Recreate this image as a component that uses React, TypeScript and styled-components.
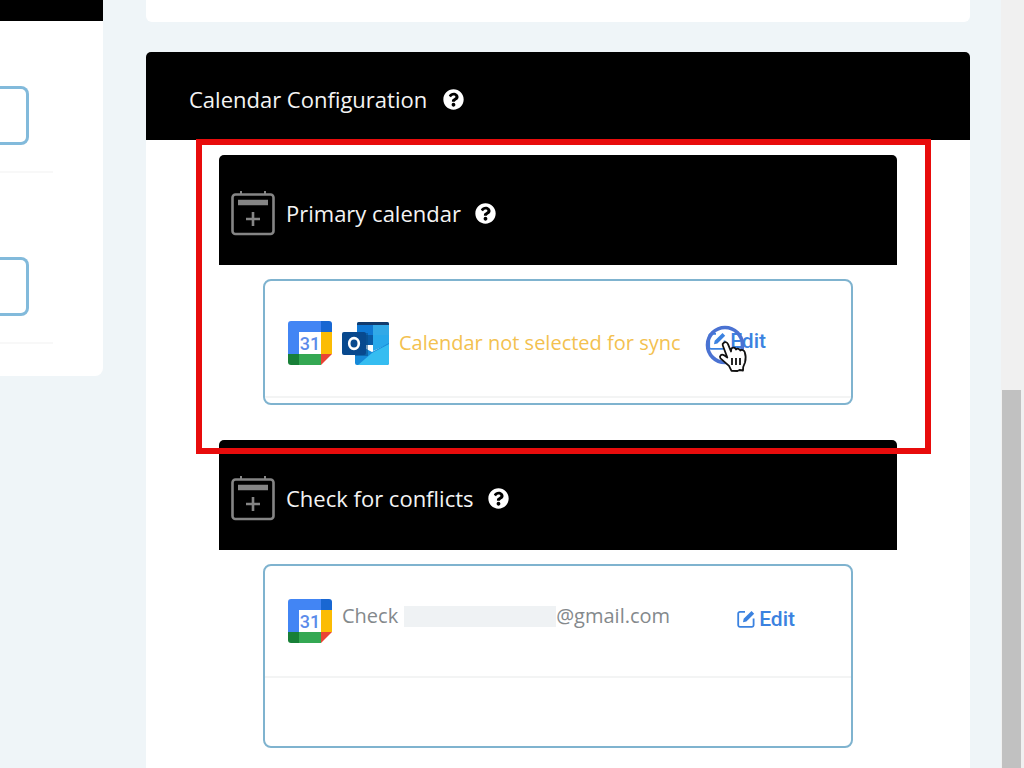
import React from "react";
import styled, { createGlobalStyle } from "styled-components";
import { FaQuestionCircle } from "react-icons/fa";

const GlobalStyle = createGlobalStyle`
  * { box-sizing: border-box; }
  body { margin: 0; background: #eff5f8; font-family: "Open Sans", "Noto Sans", sans-serif; }
  h2, h3, p { margin: 0; font-weight: 400; }
  button { border: 0; padding: 0; background: none; cursor: pointer; }
`;

const Page = styled.div`
  display: flex;
  height: 100vh;
  overflow: hidden;
`;

const Side = styled.aside`
  flex: 0 0 10%;
  min-width: 103px;
`;

const SideCard = styled.section`
  background: #fff;
  border-radius: 0 0 8px 0;
  padding-bottom: 32px;
`;

const SideHeader = styled.div`
  height: 21px;
  background: #000;
`;

const SideItem = styled.div`
  margin: 38px 50px 0 0;
  padding: 27px 24px 26px 0;
  border-bottom: 2px solid #f8f8f8;
  & + & { margin-top: 57px; }
`;

const SideField = styled.div`
  height: 59px;
  border: 3px solid #82badb;
  border-left: 0;
  border-radius: 0 8px 8px 0;
`;

const Main = styled.main`
  flex: 1;
  display: flex;
  flex-direction: column;
  gap: 30px;
  padding: 0 31px 0 43px;
`;

const PreviousCard = styled.section`
  flex: none;
  height: 22px;
  background: #fff;
  border-radius: 0 0 6px 6px;
`;

const Card = styled.section`
  flex: none;
  background: #fff;
  border-radius: 5px;
  padding-bottom: 60px;
`;

const CardHeader = styled.header`
  display: flex;
  align-items: center;
  gap: 16px;
  height: 88px;
  padding: 6px 43px 0;
  background: #000;
  color: #f4f4f4;
  border-radius: 5px 5px 0 0;
`;

const Title = styled.h2`
  font-size: 22px;
  line-height: 30px;
  white-space: nowrap;
`;

const Groups = styled.div`
  padding: 15px 73px 0;
`;

const Group = styled.section`
  position: relative;
  padding-bottom: 35px;
`;

const GroupHeader = styled.header`
  display: flex;
  align-items: center;
  gap: 11px;
  height: 110px;
  padding: 6px 12px 0;
  background: #000;
  color: #f4f4f4;
  border-radius: 5px 5px 0 0;
`;

const GroupTitle = styled.div`
  display: flex;
  align-items: center;
  gap: 14px;
`;

const HelpButton = styled.button`
  display: flex;
  color: #fff;
`;

const Box = styled.div<{ $space: number }>`
  margin: 14px 44px 0;
  padding-bottom: ${(p) => p.$space}px;
  border: 2px solid #7fb3cf;
  border-radius: 8px;
`;

const Row = styled.div<{ $tall?: boolean }>`
  display: flex;
  align-items: center;
  height: ${(p) => (p.$tall ? 117 : 112)}px;
  padding: ${(p) => (p.$tall ? "8px 85px 0 23px" : "0 56px 0 23px")};
  border-bottom: 2px solid #f3f4f4;
`;

const Logos = styled.div`
  display: flex;
  align-items: center;
  gap: 10px;
  margin-right: 10px;
`;

const Status = styled.p<{ $warn?: boolean }>`
  display: flex;
  align-items: center;
  flex: 1;
  padding-bottom: ${(p) => (p.$warn ? 0 : 10)}px;
  font-size: 20px;
  line-height: 28px;
  white-space: nowrap;
  color: ${(p) => (p.$warn ? "#f3c14f" : "#84898c")};
`;

const Redacted = styled.span`
  width: 152px;
  height: 21px;
  margin-left: 6px;
  background: #eff2f4;
`;

const EditLink = styled.a`
  position: relative;
  display: flex;
  align-items: center;
  gap: 4px;
  margin-bottom: 4px;
  color: #3b82e0;
  font: 500 21px/24px Roboto, sans-serif;
  text-decoration: none;
`;

const Pointer = styled.svg`
  position: absolute;
  left: -4px;
  top: -6px;
  z-index: 3;
`;

const Highlight = styled.div`
  position: absolute;
  inset: -16px -34px -14px -23px;
  border: 6px solid #e80c0c;
  z-index: 2;
  pointer-events: none;
`;

const ScrollTrack = styled.div`
  flex: 0 0 23px;
  display: flex;
  flex-direction: column;
  padding: 0 3px 0 1px;
  background: #f0f0f0;
`;

const ScrollThumb = styled.div`
  height: 378px;
  margin-top: auto;
  background: #c1c1c1;
`;

const CalendarPlus = () => (
  <svg width="44" height="46" viewBox="0 0 44 46" fill="none" stroke="#858585" aria-hidden="true">
    <rect x="1.5" y="4.500" width="41" height="39.500" rx="3" strokeWidth="2.6" />
    <path d="M10 1v3M34 1v3" strokeWidth="2" />
    <path d="M7 12.500h30" strokeWidth="5.500" />
    <path d="M15 29h14M22 22v14" strokeWidth="2.6" />
  </svg>
);

const GoogleCalendar = () => (
  <svg width="44" height="44" viewBox="0 0 44 44" role="img" aria-label="Google Calendar">
    <path d="M33 11H11v22h22z" fill="#fff" />
    <path d="M3 0h30v11H11v23H0V3a3 3 0 0 1 3-3z" fill="#4285f4" />
    <path d="M33 0h8a3 3 0 0 1 3 3v8H33z" fill="#1967d2" />
    <path d="M33 11h11v22H33z" fill="#fbbc04" />
    <path d="M11 33h22v11H11z" fill="#34a853" />
    <path d="M0 33h11v11H3a3 3 0 0 1-3-3z" fill="#188038" />
    <path d="M33 33h11L33 44z" fill="#ea4335" />
    <text x="22" y="29" textAnchor="middle" fontFamily="Roboto, sans-serif" fontSize="18" fontWeight="500" fill="#5b8bea">31</text>
  </svg>
);

const Outlook = () => (
  <svg width="47" height="44" viewBox="0 0 47 44" role="img" aria-label="Outlook">
    <path d="M17 1h28a2 2 0 0 1 2 2v21H15V3a2 2 0 0 1 2-2z" fill="#1490df" />
    <path d="M17 1h28a2 2 0 0 1 2 2v1H15V3a2 2 0 0 1 2-2z" fill="#123b6d" />
    <path d="M15 4h16v10H15z" fill="#0f78d4" />
    <path d="M31 4h16v10H31z" fill="#32a9e7" />
    <path d="M15 14h16v10H15z" fill="#0a5aa5" />
    <path d="M31 14h16v9L31 30z" fill="#28a8ea" />
    <path d="M13 22l17 9 17-9v20a2 2 0 0 1-2 2H15a2 2 0 0 1-2-2z" fill="#1689d8" />
    <path d="M47 23v19a2 2 0 0 1-2 2H16L30 32z" fill="#35bdf1" />
    <path d="M13 12h13v23H13z" fill="#084a86" opacity=".55" />
    <rect y="11" width="24" height="23" rx="2" fill="#08498e" />
    <ellipse cx="12" cy="22.500" rx="4.800" ry="5.400" fill="none" stroke="#fff" strokeWidth="2.600" />
  </svg>
);

const EditIcon = () => (
  <svg width="18" height="18" viewBox="0 0 18 18" fill="none" stroke="currentColor" aria-hidden="true">
    <path d="M8 1.800H3A1.800 1.800 0 0 0 1.200 3.600V15A1.800 1.800 0 0 0 3 16.800h11.800A1.800 1.800 0 0 0 16.600 15V8.500" strokeWidth="1.800" />
    <path d="M6 12.200l.7-3.400L14.500 1l2.700 2.700L9.400 11.500z" fill="currentColor" stroke="none" />
  </svg>
);

const HandPointer = () => (
  <Pointer width="46" height="50" viewBox="0 0 46 50" aria-hidden="true">
    <circle cx="21" cy="22" r="17.500" fill="none" stroke="#4a72d2" strokeWidth="3.600" />
    <path
      d="M19.500 20c1.800-1.600 3.800-.8 4.500 1.200l3 7.300.4-3c1.600-1.700 3.800-1 4.600 1 1.400-1.400 3.600-.8 4.300 1 1.600-1.200 3.700-.3 4.400 1.500 1.200 3.700 1.300 7.300.3 10.500l-1.800 4.500-.2 3.500-3.500-.5-2 1-6-.2-2.500-5-8.500-7.500c-1.500-2.300.8-4.600 3.200-3.200l3.600 2.400-4.500-12c-.4-1 0-2 .7-2.500z"
      fill="#fff" stroke="#111" strokeWidth="1.800" strokeLinejoin="round"
    />
    <path d="M28 35v7M32 35v7M36 35v7" stroke="#111" strokeWidth="1.800" />
  </Pointer>
);

const Help = ({ topic }: { topic: string }) => (
  <HelpButton type="button" aria-label={`Help: ${topic}`}>
    <FaQuestionCircle size={21} />
  </HelpButton>
);

const GroupHead = ({ title }: { title: string }) => (
  <GroupHeader>
    <CalendarPlus />
    <GroupTitle>
      <Title as="h3">{title}</Title>
      <Help topic={title} />
    </GroupTitle>
  </GroupHeader>
);

export default function App() {
  return (
    <Page>
      <GlobalStyle />
      <Side>
        <SideCard>
          <SideHeader />
          <SideItem><SideField /></SideItem>
          <SideItem><SideField /></SideItem>
        </SideCard>
      </Side>
      <Main>
        <PreviousCard />
        <Card>
          <CardHeader>
            <Title>Calendar Configuration</Title>
            <Help topic="Calendar Configuration" />
          </CardHeader>
          <Groups>
            <Group>
              <GroupHead title="Primary calendar" />
              <Box $space={5}>
                <Row $tall>
                  <Logos>
                    <GoogleCalendar />
                    <Outlook />
                  </Logos>
                  <Status $warn>Calendar not selected for sync</Status>
                  <EditLink href="#primary">
                    <EditIcon />
                    Edit
                    <HandPointer />
                  </EditLink>
                </Row>
              </Box>
              <Highlight />
            </Group>
            <Group>
              <GroupHead title="Check for conflicts" />
              <Box $space={68}>
                <Row>
                  <Logos>
                    <GoogleCalendar />
                  </Logos>
                  <Status>
                    Check
                    <Redacted />
                    @gmail.com
                  </Status>
                  <EditLink href="#conflicts">
                    <EditIcon />
                    Edit
                  </EditLink>
                </Row>
              </Box>
            </Group>
          </Groups>
        </Card>
      </Main>
      <ScrollTrack>
        <ScrollThumb />
      </ScrollTrack>
    </Page>
  );
}
